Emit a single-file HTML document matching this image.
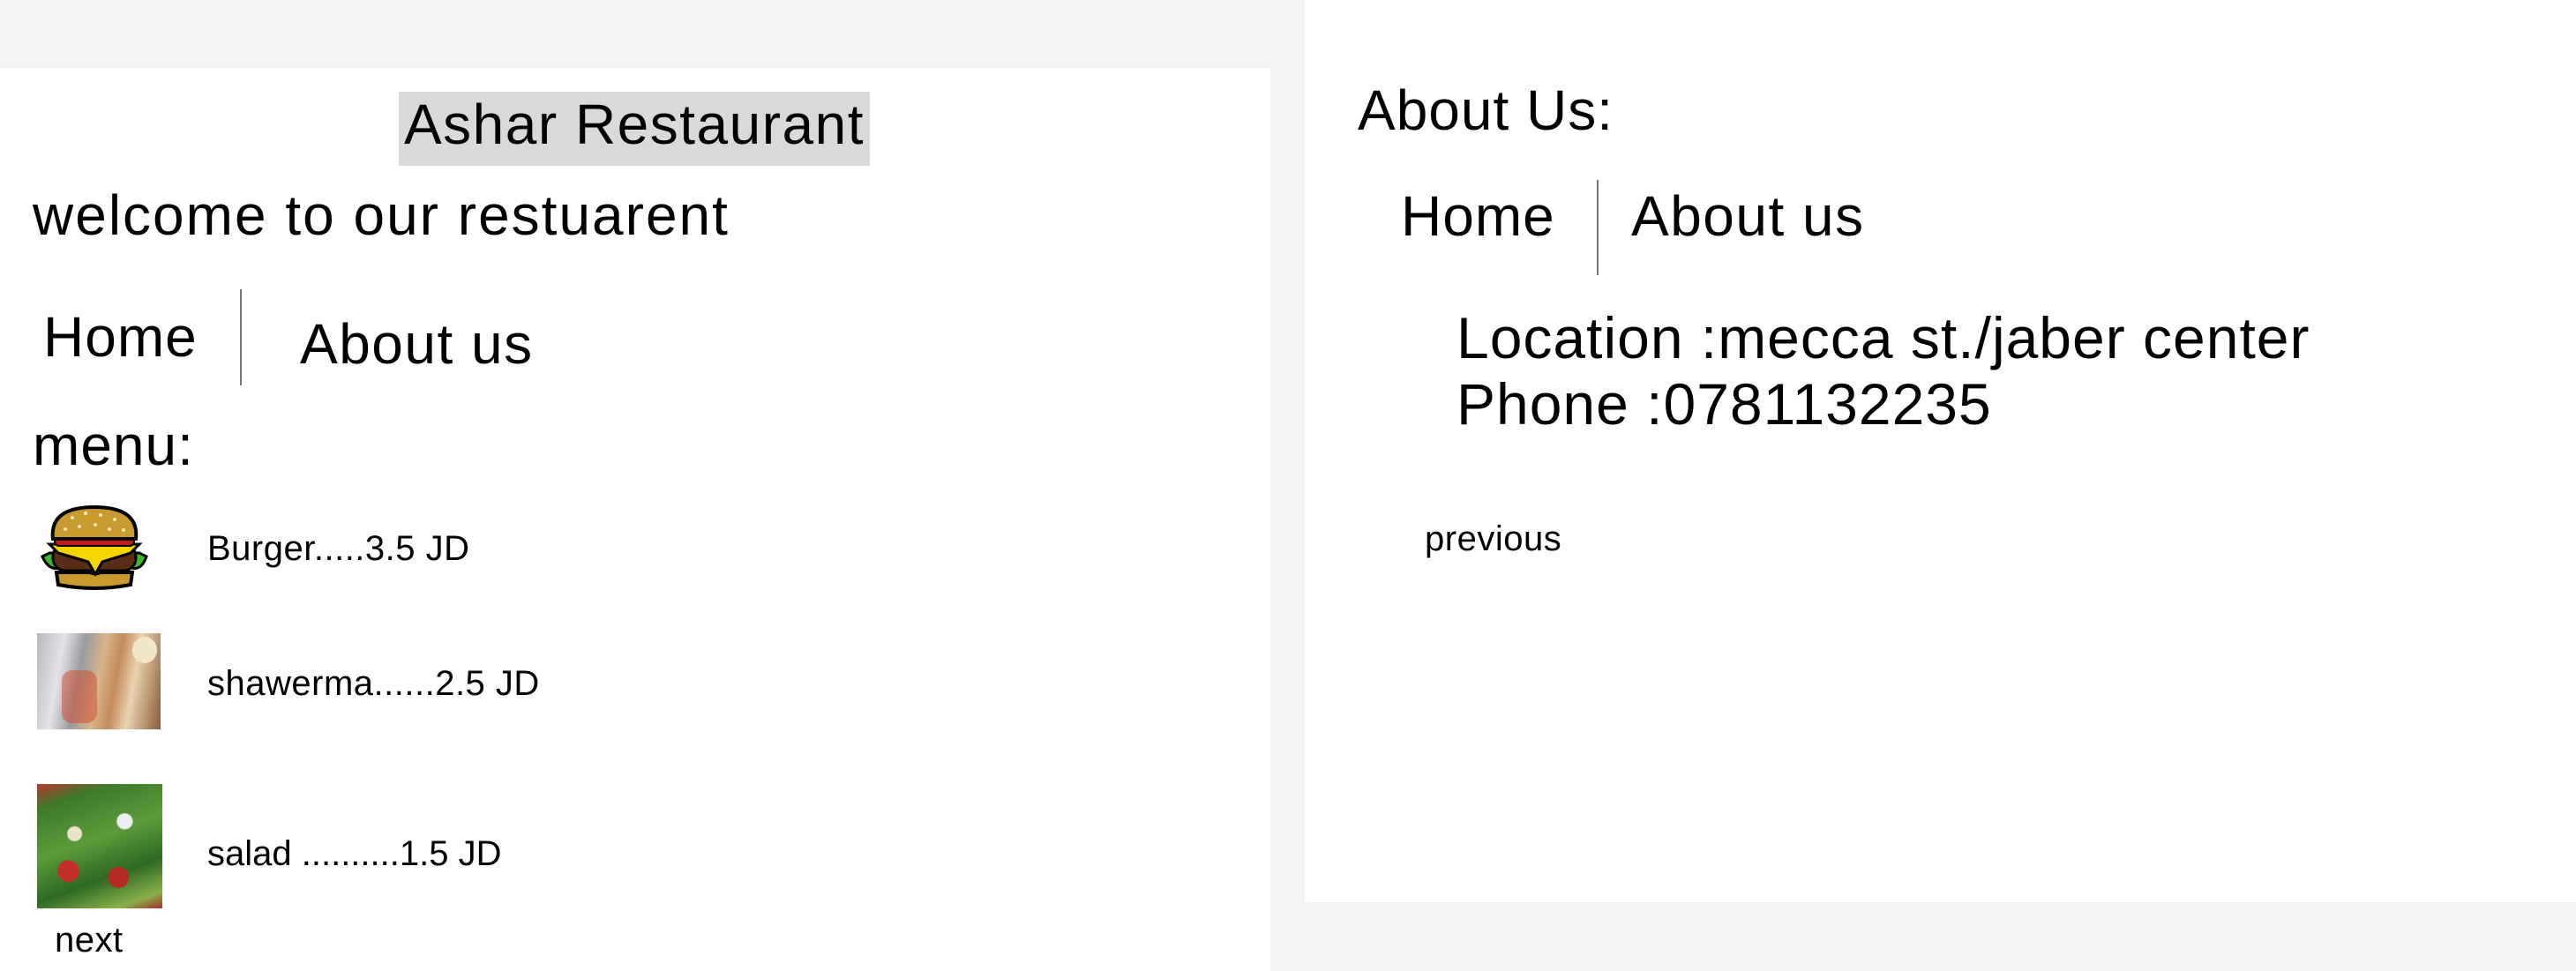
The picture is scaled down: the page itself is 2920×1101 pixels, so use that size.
<!DOCTYPE html>
<html><head><meta charset="utf-8"><style>
html,body{margin:0;padding:0;}
body{width:2920px;height:1101px;background:#f3f3f3;position:relative;overflow:hidden;font-family:"Liberation Sans",Arial,sans-serif;color:#000;}
.p{position:absolute;background:#fff;}
.t{position:absolute;line-height:1;white-space:nowrap;letter-spacing:1px;}
.b{font-size:64px;}
.s{font-size:40px;letter-spacing:0.5px;}
.v{position:absolute;width:2px;background:#777;}
</style></head><body>
<div class="p" style="left:0;top:77px;width:1440px;height:1024px;"></div>
<div class="p" style="left:1479px;top:0;width:1441px;height:1023px;"></div>

<div style="position:absolute;left:452px;top:104px;width:534px;height:84px;background:#d9d9d9;"></div>
<div class="t b" style="left:452px;width:534px;text-align:center;top:109px;letter-spacing:1.5px;">Ashar Restaurant</div>
<div class="t b" style="left:37px;top:212px;letter-spacing:2px;">welcome to our restuarent</div>
<div class="t b" style="left:49px;top:350px;">Home</div>
<div class="v" style="left:272px;top:328px;height:109px;"></div>
<div class="t b" style="left:340px;top:358px;letter-spacing:1.5px;">About us</div>
<div class="t b" style="left:37px;top:473px;">menu:</div>

<svg style="position:absolute;left:42px;top:573px" width="130" height="98" viewBox="0 0 130 98">
<path d="M22 76 L108 76 L106 90 Q65 98 24 90Z" fill="#c99a2e" stroke="#000" stroke-width="4"/>
<path d="M6 58 Q14 76 28 70 Q40 82 54 72 Q66 84 78 72 Q92 82 104 70 Q118 76 124 58 L116 54 L14 54Z" fill="#3fb82f" stroke="#000" stroke-width="3"/>
<rect x="18" y="44" width="94" height="30" rx="14" fill="#5a2e16" stroke="#000" stroke-width="3"/>
<path d="M14 44 L116 44 L106 54 L74 64 L66 78 L58 64 L24 54Z" fill="#f5d400" stroke="#000" stroke-width="3"/>
<rect x="20" y="36" width="90" height="10" rx="5" fill="#c01a1a" stroke="#000" stroke-width="2"/>
<path d="M18 38 Q14 2 65 2 Q116 2 112 38Z" fill="#c99a2e" stroke="#000" stroke-width="4"/>
<g fill="#f6e7b6"><circle cx="40" cy="14" r="2"/><circle cx="55" cy="9" r="2"/><circle cx="72" cy="11" r="2"/><circle cx="88" cy="16" r="2"/><circle cx="48" cy="24" r="2"/><circle cx="66" cy="22" r="2"/><circle cx="82" cy="27" r="2"/><circle cx="32" cy="27" r="2"/><circle cx="98" cy="28" r="2"/></g>
</svg>
<div class="t s" style="left:235px;top:602px;">Burger.....3.5 JD</div>

<div style="position:absolute;left:42px;top:718px;width:140px;height:109px;background:linear-gradient(100deg,#b8b8bc 0%,#e4e4e8 20%,#9a9aa0 35%,#d9b48a 50%,#c48a5a 62%,#e9d3b0 75%,#8a5b3a 100%);"></div>
<div style="position:absolute;left:70px;top:760px;width:40px;height:60px;background:#cf4a2a;opacity:.5;border-radius:12px;"></div>
<div style="position:absolute;left:150px;top:722px;width:28px;height:30px;background:#f0e6c8;border-radius:50%;"></div>
<div class="t s" style="left:235px;top:755px;">shawerma......2.5 JD</div>

<div style="position:absolute;left:42px;top:889px;width:142px;height:141px;background:radial-gradient(circle at 30% 40%,#e9e4c8 0 6%,transparent 7%),radial-gradient(circle at 70% 30%,#eee 0 6%,transparent 7%),radial-gradient(circle at 25% 70%,#c2302a 0 8%,transparent 9%),radial-gradient(circle at 65% 75%,#b52a22 0 8%,transparent 9%),linear-gradient(160deg,#b8362e 0%,#3f7a2a 15%,#5c9a3a 45%,#2d6a22 70%,#8ab04a 90%,#a2302a 100%);"></div>
<div class="t s" style="left:235px;top:948px;letter-spacing:0;">salad ..........1.5 JD</div>
<div class="t s" style="left:62px;top:1046px;">next</div>

<div class="t b" style="left:1539px;top:93px;">About Us:</div>
<div class="t b" style="left:1588px;top:213px;">Home</div>
<div class="v" style="left:1810px;top:204px;height:108px;"></div>
<div class="t b" style="left:1849px;top:213px;letter-spacing:1.5px;">About us</div>
<div class="t" style="font-size:66px;left:1651px;top:350px;">Location :mecca st./jaber center</div>
<div class="t" style="font-size:66px;left:1651px;top:425px;">Phone :0781132235</div>
<div class="t s" style="left:1615px;top:591px;">previous</div>
</body></html>
